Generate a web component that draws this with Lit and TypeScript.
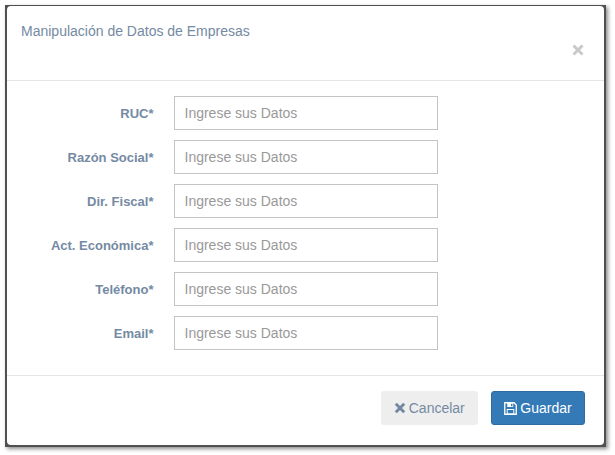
import { LitElement, html, css } from "lit";
import { customElement } from "lit/decorators.js";

const FIELDS = ["RUC*", "Razón Social*", "Dir. Fiscal*", "Act. Económica*", "Teléfono*", "Email*"];

@customElement("app-root")
export class AppRoot extends LitElement {
  static styles = css`
    :host {
      display: block;
      width: 615px;
      height: 455px;
      background: #fff;
      font-family: "Liberation Sans", Arial, sans-serif;
      font-size: 14px;
      color: #6f8299;
      overflow: hidden;
    }
    .page { box-sizing: border-box; padding: 5px 8px 7px 5px; height: 455px; }
    .frame {
      box-sizing: border-box;
      width: 601px;
      height: 442px;
      background: #505050;
      padding: 1px 2px 2px 2px;
      box-shadow: 2px 2px 4px rgba(0,0,0,.45);
    }
    .modal {
      box-sizing: border-box;
      height: 100%;
      background: #fff;
      border-radius: 4px;
      display: flex;
      flex-direction: column;
    }
    .header {
      height: 75px;
      box-sizing: border-box;
      padding: 15px 15px 0 14px;
      border-bottom: 1px solid #e5e5e5;
      display: flex;
      justify-content: space-between;
      flex: none;
    }
    .title { font-size: 14px; line-height: 20px; color: #748aa3; }
    .close {
      margin-top: 23px; margin-right: 5px; width: 12px; height: 12px; display: block;
    }
    .body {
      flex: 1;
      padding: 15px 0 0;
      display: flex;
      flex-direction: column;
      gap: 10px;
    }
    .row { display: flex; align-items: center; height: 34px; }
    label {
      width: 146.5px;
      text-align: right;
      font-weight: 700;
      font-size: 13px;
      color: #748aa3;
    }
    .input {
      margin-left: 20.5px;
      box-sizing: border-box;
      width: 264px;
      height: 34px;
      border: 1px solid #c4c4c4;
      padding: 0 9.5px;
      font: 14px "Liberation Sans", Arial, sans-serif;
      outline: none;
      background: #fff;
    }
    .input::placeholder { color: #999; opacity: 1; }
    .footer {
      height: 70px;
      flex: none;
      box-sizing: border-box;
      border-top: 1px solid #e5e5e5;
      padding: 15px 19px 0 0;
      display: flex;
      justify-content: flex-end;
      gap: 13px;
    }
    .btn {
      box-sizing: border-box;
      height: 34px;
      border-radius: 3px;
      border: 1px solid transparent;
      font: 14px "Liberation Sans", Arial, sans-serif;
      display: inline-flex;
      align-items: center;
      justify-content: center;
      gap: 3px;
      padding: 0;
    }
    .cancel { width: 97px; background: #eee; color: #748aa3; gap: 2.5px; }
    .save { width: 94px; background: #337ab7; border-color: #2e6da4; color: #fff; }
    .btn svg { width: 12px; height: 12px; display: block; }
    .btn .disk { width: 13px; height: 13px; }
  `;

  render() {
    return html`
      <div class="page">
        <div class="frame">
          <div class="modal">
            <div class="header">
              <div class="title">Manipulación de Datos de Empresas</div>
              <svg class="close" viewBox="0 0 12 12"><path d="M1.5 1.5l9 9M10.5 1.5l-9 9" stroke="#c9c9c9" stroke-width="3"/></svg>
            </div>
            <div class="body">
              ${FIELDS.map(
                (f) => html`<div class="row"><label>${f}</label><input class="input" placeholder="Ingrese sus Datos" /></div>`
              )}
            </div>
            <div class="footer">
              <button class="btn cancel">
                <svg viewBox="0 0 12 12"><path d="M1.8 1.8l8.4 8.4M10.2 1.8l-8.4 8.4" stroke="currentColor" stroke-width="3"/></svg>
                Cancelar
              </button>
              <button class="btn save">
                <svg class="disk" viewBox="0 0 12 12">
                  <path fill="none" stroke="currentColor" stroke-width="1.2" d="M.7.7h8.6l2 2v8.6H.7z"/>
                  <path fill="currentColor" d="M3 1h5.5v3.5H3zM2.5 6.5h7V11h-7z"/>
                  <path fill="#337ab7" d="M6.5 1.6h1.3v2.3H6.5zM3.4 7.4h5.2V10.3H3.4z"/>
                </svg>
                Guardar
              </button>
            </div>
          </div>
        </div>
      </div>
    `;
  }
}
